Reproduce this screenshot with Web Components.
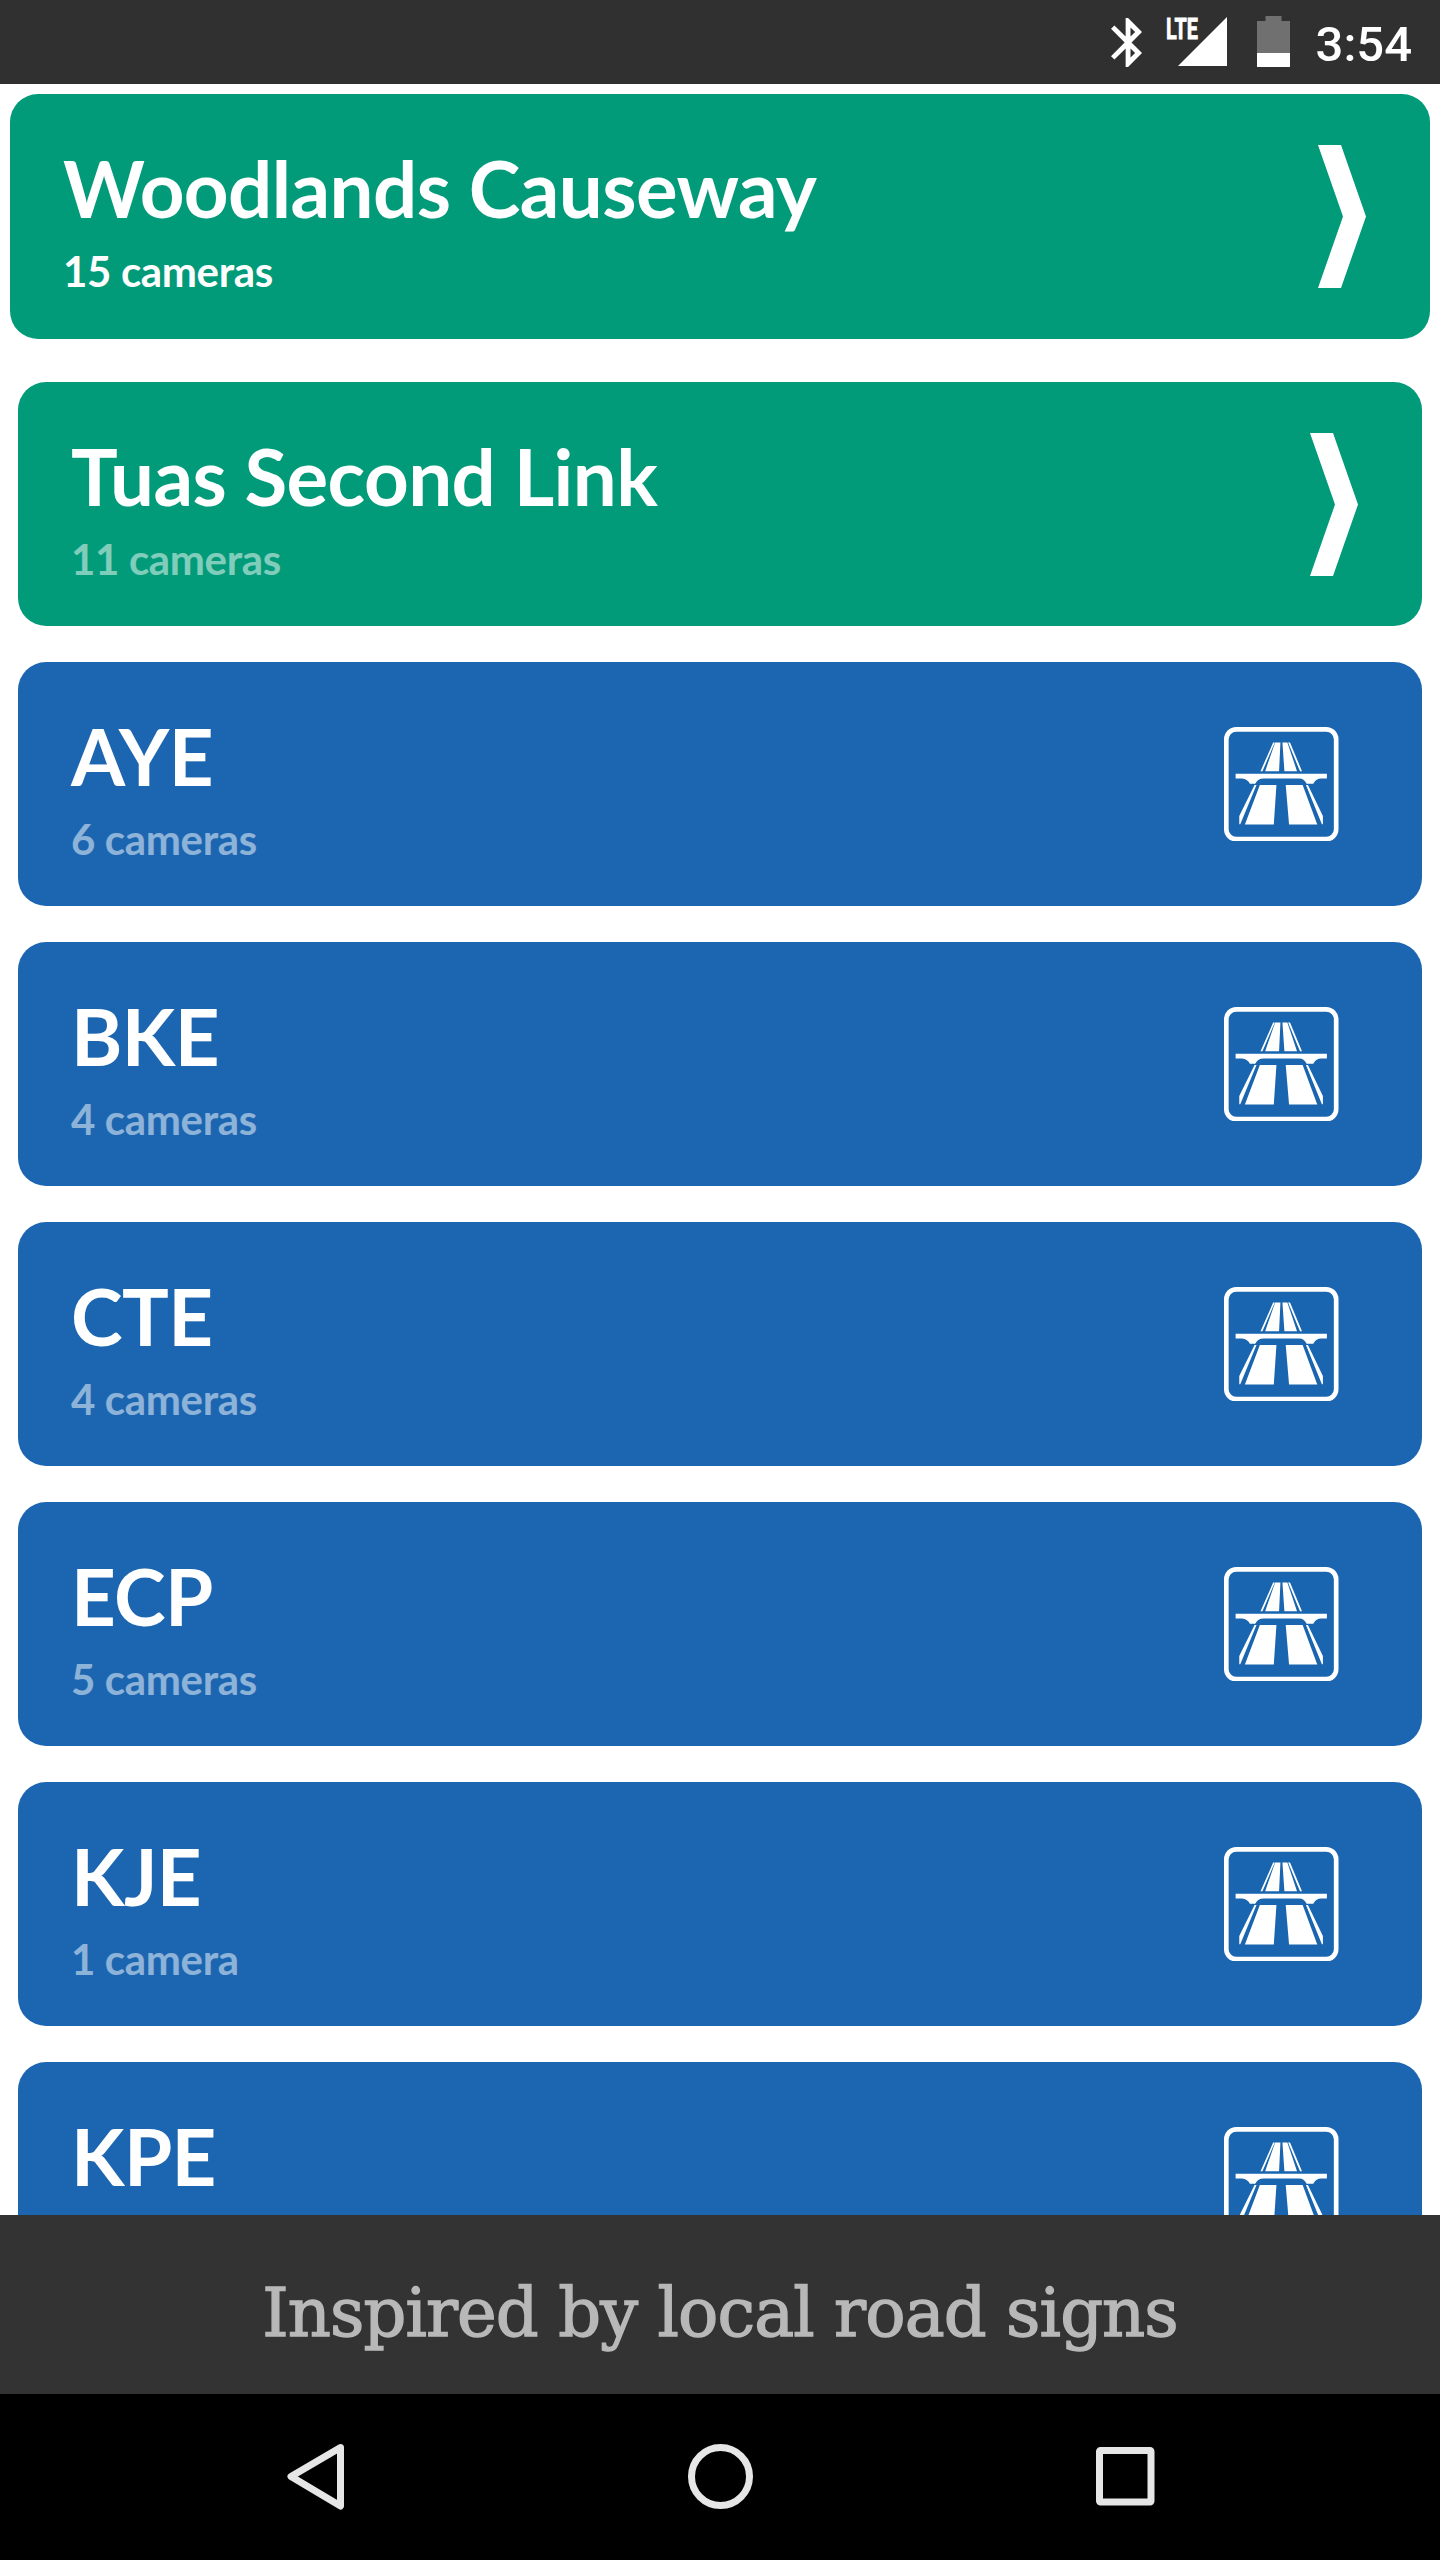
<!DOCTYPE html>
<html lang="en">
<head>
<meta charset="utf-8">
<title>Traffic cameras</title>
<style>
  html, body { margin: 0; height: 100%; }
  body { background: #fff; overflow: hidden; font-family: Lato, "Liberation Sans", sans-serif; }
</style>
</head>
<body>
<camera-app>
  <status-bar slot="status">3:54</status-bar>
  <road-card kind="border" active>Woodlands Causeway<span slot="sub">15 cameras</span></road-card>
  <road-card kind="border">Tuas Second Link<span slot="sub">11 cameras</span></road-card>
  <road-card>AYE<span slot="sub">6 cameras</span></road-card>
  <road-card>BKE<span slot="sub">4 cameras</span></road-card>
  <road-card>CTE<span slot="sub">4 cameras</span></road-card>
  <road-card>ECP<span slot="sub">5 cameras</span></road-card>
  <road-card>KJE<span slot="sub">1 camera</span></road-card>
  <road-card>KPE<span slot="sub"></span></road-card>
  <caption-bar slot="caption">Inspired by local road signs</caption-bar>
  <nav-bar slot="nav"></nav-bar>
</camera-app>

<script>
class CameraApp extends HTMLElement {
  constructor() {
    super();
    this.attachShadow({ mode: "open" });
    this.shadowRoot.innerHTML = `
      <style>
        :host { display:flex; flex-direction:column; width:1440px; height:2560px; overflow:hidden; }
        .list {
          flex:1; min-height:0; overflow:hidden;
          display:flex; flex-direction:column; gap:36px;
          padding:10px 18px 0; box-sizing:border-box;
        }
      </style>
      <slot name="status"></slot>
      <div class="list"><slot></slot></div>
      <slot name="caption"></slot>
      <slot name="nav"></slot>
    `;
  }
}
customElements.define("camera-app", CameraApp);

class StatusBar extends HTMLElement {
  constructor() {
    super();
    this.attachShadow({ mode: "open" });
    this.shadowRoot.innerHTML = `
      <style>
        :host {
          display:flex; flex:none; justify-content:flex-end; align-items:flex-start;
          height:84px; box-sizing:border-box; padding-right:28px;
          background:#303030; color:#fff;
        }
        svg { display:block; flex:none; }
        .bt { margin:18px 20px 0 0; }
        .signal { margin-right:30px; }
        .battery { margin:16px 26px 0 0; }
        .time { padding-top:16px; font:500 49px/58px Roboto, sans-serif; }
      </style>
      <svg class="bt" width="31" height="49" viewBox="5 2 12.71 20" fill="#fff">
        <path d="M17.71 7.71L12 2h-1v7.59L6.41 5 5 6.41 10.59 12 5 17.59 6.41 19 11 14.41V22h1l5.71-5.71-4.3-4.29zM13 5.83l1.88 1.88L13 9.59zm1.88 10.46L13 18.17v-3.76z"/>
      </svg>
      <svg class="signal" width="65" height="84" viewBox="0 0 65 84" fill="#fff">
        <path d="M65 17v49H16z"/>
        <text x="4" y="39" font-family="Roboto" font-weight="700" font-size="29" stroke="#fff" stroke-width=".8" textLength="32" lengthAdjust="spacingAndGlyphs">LTE</text>
      </svg>
      <svg class="battery" width="33" height="51" viewBox="0 0 33 51">
        <path fill="#707070" d="M8.500 0h16v5H33v32H0V5h8.500z"/>
        <path fill="#fff" d="M0 37h33v14H0z"/>
      </svg>
      <div class="time"><slot></slot></div>
    `;
  }
}
customElements.define("status-bar", StatusBar);

const CHEVRON = `
  <svg width="48" height="143" viewBox="0 0 48 143" fill="#fff">
    <path d="M0 0h23l25 71.500L23 143H0l25-71.500z"/>
  </svg>`;

const EXPRESSWAY = `
  <svg width="114.500" height="114.500" viewBox="71 80 345 345" fill="#fff">
    <rect x="78" y="87" width="331" height="331" rx="30" fill="#1965af" stroke="#fff" stroke-width="14"/>
    <path d="M219 127h5l-37 86h-6zM225 127h16l-4 86h-42zM247 127h15l29 86h-38zM264 127h6l36 86h-6z"/>
    <path d="M106 221h275v14h-20q-13 1-21 16h-20q-8-16-22-16H190q-17 0-25 16h-16q-6-14-24-16h-19z"/>
    <path d="M163 255h6l-49 118h-3v-25zM179 255h50l-8 119h-87zM257 255h51l44 119h-85zM318 255h6l45 93v25h-3z"/>
  </svg>`;

class RoadCard extends HTMLElement {
  constructor() {
    super();
    this.attachShadow({ mode: "open" });
  }

  connectedCallback() {
    const border = this.getAttribute("kind") === "border";
    this.shadowRoot.innerHTML = `
      <style>
        :host {
          display:flex; flex:none; justify-content:space-between; align-items:center;
          height:244px; padding:0 83.500px 0 53px; box-sizing:border-box;
          border-radius:28px; background:#1c66b1; color:#fff;
        }
        :host([kind="border"]) { background:#029b79; padding-right:64px; }
        /* pressed card grows out to the sides */
        :host([active]) { height:245px; margin:0 -8px 7px; }
        .text { align-self:flex-start; padding-top:47px; }
        .title { font-size:78px; line-height:94px; font-weight:700; letter-spacing:-.58px; white-space:nowrap; }
        .sub { margin-top:11px; font-size:42px; line-height:50px; font-weight:700; letter-spacing:-.35px; opacity:.5; }
        :host([active]) .sub { opacity:1; }
        svg { display:block; }
      </style>
      <div class="text">
        <div class="title"><slot></slot></div>
        <div class="sub"><slot name="sub"></slot></div>
      </div>
      ${border ? CHEVRON : EXPRESSWAY}
    `;
  }
}
customElements.define("road-card", RoadCard);

class CaptionBar extends HTMLElement {
  constructor() {
    super();
    this.attachShadow({ mode: "open" });
    this.shadowRoot.innerHTML = `
      <style>
        :host {
          display:flex; flex:none; justify-content:center; height:179px; padding-top:58px;
          box-sizing:border-box; background:#333; color:#b8b8b8;
          font:67px/80px "DejaVu Serif", serif;
          letter-spacing:-.9px; white-space:nowrap; -webkit-text-stroke:1.4px #b8b8b8;
        }
      </style>
      <span><slot></slot></span>
    `;
  }
}
customElements.define("caption-bar", CaptionBar);

class NavBar extends HTMLElement {
  constructor() {
    super();
    this.attachShadow({ mode: "open" });
    this.shadowRoot.innerHTML = `
      <style>
        :host {
          display:flex; flex:none; justify-content:space-between; align-items:center;
          height:166px; padding:0 281px 0 282px; box-sizing:border-box; background:#000;
        }
        svg { display:block; fill:none; stroke:#e6e6e6; stroke-width:7; stroke-linejoin:round; }
      </style>
      <svg width="66" height="66" viewBox="0 0 66 66"><path d="M58.500 3.500L9 32.500l49.500 29.500z"/></svg>
      <svg width="66" height="66" viewBox="0 0 66 66"><circle cx="32.500" cy="32.500" r="29"/></svg>
      <svg width="66" height="66" viewBox="0 0 66 66"><rect x="6.500" y="6.500" width="51.500" height="51.500" rx="1"/></svg>
    `;
  }
}
customElements.define("nav-bar", NavBar);
</script>
</body>
</html>
